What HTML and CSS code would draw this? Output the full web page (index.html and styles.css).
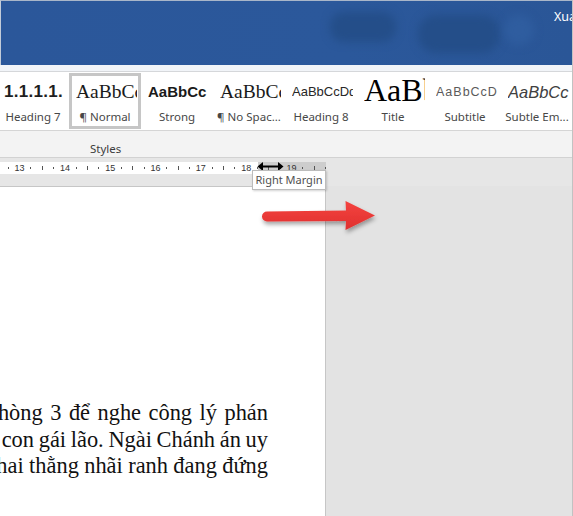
FILE: index.html
```html
<!DOCTYPE html>
<html lang="vi">
<head>
<meta charset="utf-8">
<title>Word - Right Margin</title>
<link rel="stylesheet" href="styles.css">
</head>
<body>
<div class="app">
  <header class="titlebar">
    <div class="blob blob-a"></div>
    <div class="blob blob-b"></div>
    <div class="blob blob-c"></div>
    <span class="user">Xuan</span>
  </header>
  <div class="tabstrip"></div>
  <div class="gallery">
    <div class="gallery-row">
      <div class="style"><div class="pv pv-h7">1.1.1.1.</div><div class="lbl">Heading 7</div></div>
      <div class="style sel"><div class="pv pv-serif">AaBbCcDd</div><div class="lbl">¶ Normal</div></div>
      <div class="style"><div class="pv pv-strong">AaBbCc</div><div class="lbl">Strong</div></div>
      <div class="style"><div class="pv pv-serif">AaBbCcDd</div><div class="lbl">¶ No Spac...</div></div>
      <div class="style"><div class="pv pv-h8">AaBbCcDd</div><div class="lbl">Heading 8</div></div>
      <div class="style"><div class="pv pv-title">AaBbCc</div><div class="lbl">Title</div></div>
      <div class="style"><div class="pv pv-sub">AaBbCcDd</div><div class="lbl">Subtitle</div></div>
      <div class="style"><div class="pv pv-em">AaBbCc</div><div class="lbl">Subtle Em...</div></div>
    </div>
  </div>
  <div class="groupbar"><span class="group-name">Styles</span></div>
  <div class="rulerzone">
    <div class="ruler">
      <span class="t dot"></span><span class="t num">13</span><span class="t dot"></span><span class="t bar"></span>
      <span class="t dot"></span><span class="t num">14</span><span class="t dot"></span><span class="t bar"></span>
      <span class="t dot"></span><span class="t num">15</span><span class="t dot"></span><span class="t bar"></span>
      <span class="t dot"></span><span class="t num">16</span><span class="t dot"></span><span class="t bar"></span>
      <span class="t dot"></span><span class="t num">17</span><span class="t dot"></span><span class="t bar"></span>
      <span class="t dot"></span><span class="t num">18</span><span class="t dot"></span><span class="t bar"></span>
      <span class="t dot"></span><span class="t num">19</span><span class="t dot"></span><span class="t bar"></span>
      <span class="t dot"></span>
    </div>
  </div>
  <div class="docarea">
    <div class="page">
      <div class="lines">
        <div class="line l1">vào Phòng 3 để nghe công lý phán</div>
        <div class="line l2">của con gái lão. Ngài Chánh án uy</div>
        <div class="line l3">hai thằng nhãi ranh đang đứng</div>
      </div>
    </div>
    <div class="canvas"></div>
  </div>

  <svg class="cursor" width="27" height="11" viewBox="0 0 27 11" aria-hidden="true">
    <path d="M4 5.5 H23" stroke="#000" stroke-width="2"/>
    <path d="M0.5 5.5 L6 1 L6 10 Z" fill="#000"/>
    <path d="M26.5 5.5 L21 1 L21 10 Z" fill="#000"/>
  </svg>
  <div class="tip">Right Margin</div>
  <svg class="arrow" width="130" height="45" viewBox="0 0 130 45" aria-hidden="true">
    <defs>
      <filter id="sh" x="-20%" y="-40%" width="140%" height="180%">
        <feDropShadow dx="1" dy="3" stdDeviation="2" flood-color="#000" flood-opacity="0.35"/>
      </filter>
      <linearGradient id="rg" x1="0" y1="0" x2="0" y2="1">
        <stop offset="0" stop-color="#f4433f"/>
        <stop offset="1" stop-color="#e0302f"/>
      </linearGradient>
    </defs>
    <path filter="url(#sh)" fill="url(#rg)" d="M12 16.5 L91 15.5 L90.5 6 L120 20.5 L90.5 35 L91 26 L12 26.5 A5 5 0 0 1 12 16.5 Z"/>
  </svg>
</div>
</body>
</html>
```

FILE: styles.css
```css
html, body {
  margin: 0;
  padding: 0;
  background: #e3e3e3;
}

.app {
  position: relative;
  width: 573px;
  height: 516px;
  overflow: hidden;
  font-family: "Noto Sans", "Liberation Sans", sans-serif;
  box-sizing: border-box;
  border-right: 1px solid #c2c2c2;
}

/* ---------- title bar ---------- */
.titlebar {
  height: 65px;
  box-sizing: border-box;
  border-top: 1px solid #a9b6c9;
  border-left: 1px solid #c3ccd9;
  background: linear-gradient(to right, #2b579a 0, #2b589b 60%, #2a5697 100%);
  display: flex;
  align-items: flex-start;
  padding-left: 329px;
  overflow: hidden;
}

.blob {
  flex: none;
  background: #244e89;
  filter: blur(4px);
  border-radius: 14px;
}
.blob-a { width: 66px; height: 30px; margin-top: 11px; }
.blob-b { width: 82px; height: 38px; margin-top: 14px; margin-left: 22px; border-radius: 18px; }
.blob-c { width: 30px; height: 30px; margin-top: 14px; margin-left: 4px; background: #2f5d9f; border-radius: 15px; }

.user {
  flex: none;
  margin-left: 20px;
  margin-top: 7px;
  color: #ffffff;
  font-size: 12.5px;
  line-height: 18px;
  white-space: nowrap;
}

.tabstrip {
  height: 6px;
  background: #f1f4f8;
  border-bottom: 1px solid #d5d7da;
}

/* ---------- style gallery ---------- */
.gallery {
  height: 58px;
  background: #ffffff;
  border-bottom: 1px solid #d5d5d5;
  overflow: hidden;
}

.gallery-row {
  display: flex;
  margin-left: -3px;
}

.style {
  flex: none;
  width: 72px;
  height: 56px;
  margin-top: 1px;
  box-sizing: border-box;
  border: 3px solid transparent;
}
.style.sel { border-color: #c6c6c6; }

.pv {
  margin-left: 4px;
  width: 61px;
  height: 32px;
  line-height: 32px;
  overflow: hidden;
  white-space: nowrap;
  color: #1a1a1a;
}

.pv-h7 {
  font-family: "Liberation Sans", sans-serif;
  font-weight: bold;
  font-size: 17px;
  letter-spacing: 0.3px;
  color: #1e1e1e;
}
.pv-serif {
  font-family: "Liberation Serif", serif;
  font-size: 19.5px;
}
.pv-strong {
  font-family: "Liberation Sans", sans-serif;
  font-weight: bold;
  font-size: 15px;
}
.pv-h8 {
  font-family: "Liberation Sans", sans-serif;
  font-size: 13px;
  color: #272727;
}
.pv-title {
  font-family: "Liberation Serif", serif;
  font-size: 32px;
  line-height: 28px;
  height: 32px;
  color: #000;
}
.pv-sub {
  font-family: "Liberation Sans", sans-serif;
  font-size: 12.5px;
  letter-spacing: 1px;
  color: #5a5a5a;
}
.pv-em {
  font-family: "Liberation Sans", sans-serif;
  font-style: italic;
  font-size: 16.5px;
  color: #404040;
}

.lbl {
  margin-top: 1px;
  font-size: 11.5px;
  line-height: 16px;
  text-align: center;
  color: #474747;
  white-space: nowrap;
}

/* ---------- group label ---------- */
.groupbar {
  height: 26px;
  background: #f3f3f3;
  border-bottom: 1px solid #d2d2d2;
  padding-left: 90px;
}
.group-name {
  display: block;
  font-size: 11.5px;
  padding-top: 9px;
  line-height: 18px;
  color: #3c3c3c;
}

/* ---------- ruler ---------- */
.rulerzone {
  height: 28px;
  background: #e6e6e6;
  padding-top: 4px;
  box-sizing: border-box;
}

.ruler {
  width: 326px;
  height: 12px;
  background: linear-gradient(to right, #ffffff 0, #ffffff 258px, #cdcdcd 258px, #cdcdcd 100%);
  display: flex;
  align-items: center;
  padding-left: 2.6px;
  box-sizing: border-box;
  overflow: hidden;
}

.t {
  flex: none;
  width: 11.33px;
  height: 12px;
  display: flex;
  align-items: center;
  justify-content: center;
}
.t.dot::before {
  content: "";
  width: 1px;
  height: 2px;
  background: #555;
}
.t.bar::before {
  content: "";
  width: 1px;
  height: 4px;
  background: #555;
}
.t.num {
  font-family: "Liberation Sans", sans-serif;
  font-size: 9px;
  line-height: 12px;
  color: #333;
}

/* ---------- document ---------- */
.docarea {
  display: flex;
  height: 330px;
}

.page {
  flex: none;
  width: 325px;
  background: #ffffff;
  border-top: 1px solid #c6c6c6;
  border-right: 1px solid #c6c6c6;
  overflow: hidden;
}

.lines {
  padding-top: 213px;
  width: 268px;
  display: flex;
  flex-direction: column;
  align-items: flex-end;
}

.line {
  white-space: nowrap;
  font-family: "Liberation Serif", serif;
  font-size: 22.4px;
  line-height: 26.7px;
  color: #111;
}
.l1 { word-spacing: 1.9px; }
.l2 { word-spacing: -0.9px; }
.l3 { word-spacing: -0.2px; }

.canvas {
  flex: 1;
  background: #e3e3e3;
}

/* ---------- overlays ---------- */
.cursor {
  position: absolute;
  left: 257px;
  top: 161px;
}

.tip {
  position: absolute;
  left: 252px;
  top: 170px;
  width: 74px;
  height: 20px;
  box-sizing: border-box;
  background: #ffffff;
  border: 1px solid #bcbcbc;
  box-shadow: 1px 1px 2px rgba(0,0,0,0.18);
  font-size: 11px;
  line-height: 18px;
  color: #4f4f4f;
  text-align: center;
  white-space: nowrap;
}

.arrow {
  position: absolute;
  left: 255px;
  top: 195px;
}
```
